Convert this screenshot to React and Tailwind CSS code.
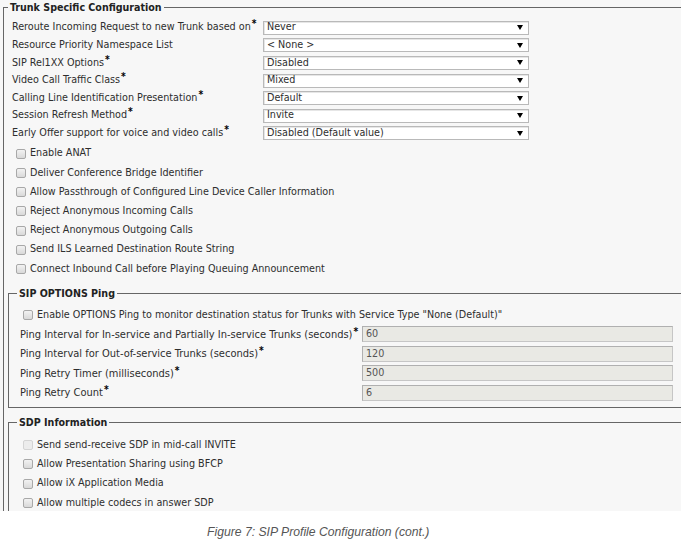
import React from 'react';

const trunkRows = [
  { label: 'Reroute Incoming Request to new Trunk based on', req: true, value: 'Never' },
  { label: 'Resource Priority Namespace List', req: false, value: '< None >' },
  { label: 'SIP Rel1XX Options', req: true, value: 'Disabled' },
  { label: 'Video Call Traffic Class', req: true, value: 'Mixed' },
  { label: 'Calling Line Identification Presentation', req: true, value: 'Default' },
  { label: 'Session Refresh Method', req: true, value: 'Invite' },
  { label: 'Early Offer support for voice and video calls', req: true, value: 'Disabled (Default value)' },
];

const trunkChecks = [
  'Enable ANAT',
  'Deliver Conference Bridge Identifier',
  'Allow Passthrough of Configured Line Device Caller Information',
  'Reject Anonymous Incoming Calls',
  'Reject Anonymous Outgoing Calls',
  'Send ILS Learned Destination Route String',
  'Connect Inbound Call before Playing Queuing Announcement',
];

const pingRows = [
  { label: 'Ping Interval for In-service and Partially In-service Trunks (seconds)', value: '60' },
  { label: 'Ping Interval for Out-of-service Trunks (seconds)', value: '120' },
  { label: 'Ping Retry Timer (milliseconds)', value: '500' },
  { label: 'Ping Retry Count', value: '6' },
];

const sdpChecks = [
  { label: 'Send send-receive SDP in mid-call INVITE', disabled: true },
  { label: 'Allow Presentation Sharing using BFCP' },
  { label: 'Allow iX Application Media' },
  { label: 'Allow multiple codecs in answer SDP' },
];

const Req = () => <sup className="-top-[3px] ml-px text-[10px] font-bold text-black">*</sup>;

const Checkbox = ({ disabled }) => (
  <span
    className={`inline-block h-[10px] w-[10px] shrink-0 rounded-[2px] border ${
      disabled
        ? 'border-[#d4d4d4] bg-[#ececec]'
        : 'border-[#a8a8a8] bg-linear-to-b from-[#f2f2f2] to-[#d9d9d9]'
    }`}
  />
);

const Select = ({ value }) => (
  <div className="flex h-[14px] w-[266px] items-center justify-between border border-[#b9b9b9] bg-white pl-[3px] pr-[5px] shadow-[inset_1px_1px_0_#e6e6e6]">
    <span className="whitespace-nowrap leading-none">{value}</span>
    <span className="h-0 w-0 border-x-[3px] border-t-[5px] border-x-transparent border-t-black" />
  </div>
);

const Legend = ({ children, className }) => (
  <legend className={`px-[2px] text-[10.6px] font-bold leading-[14px] text-[#222] ${className}`}>
    {children}
  </legend>
);

export default function App() {
  return (
    <div className="h-[543px] w-[688px] overflow-hidden bg-white font-['DejaVu_Sans_Condensed','DejaVu_Sans',sans-serif] text-[10.7px] text-[#2e2e2e]">
      {/* screenshot area */}
      <div className="h-[511px] w-[681px] overflow-hidden bg-[#f7f7f7]">
        <fieldset className="ml-[3px] w-[720px] border border-[#666] pl-[4px]">
          <Legend className="ml-0">Trunk Specific Configuration</Legend>

          {/* dropdown rows */}
          <div className="mt-[5px] pl-[4px]">
            {trunkRows.map((row) => (
              <div key={row.label} className="grid h-[17.6px] grid-cols-[251px_266px] items-center">
                <span className="whitespace-nowrap leading-none">
                  {row.label}
                  {row.req && <Req />}
                </span>
                <Select value={row.value} />
              </div>
            ))}
          </div>

          {/* checkboxes */}
          <div className="mt-[2px] pl-[8px]">
            {trunkChecks.map((label) => (
              <div key={label} className="flex h-[19.2px] items-center gap-[4px]">
                <Checkbox />
                <span className="whitespace-nowrap leading-none">{label}</span>
              </div>
            ))}
          </div>

          {/* SIP OPTIONS Ping */}
          <fieldset className="mt-[8px] w-[700px] border border-[#666] pb-[5px] pl-[11px]">
            <Legend className="-ml-[3px]">SIP OPTIONS Ping</Legend>
            <div className="mt-[6px] flex h-[18px] items-center gap-[4px] pl-[3px]">
              <Checkbox />
              <span className="whitespace-nowrap leading-none">
                Enable OPTIONS Ping to monitor destination status for Trunks with Service Type "None (Default)"
              </span>
            </div>
            {pingRows.map((row) => (
              <div key={row.label} className="grid h-[19.5px] grid-cols-[342px_311px] items-center text-[11px]">
                <span className="whitespace-nowrap leading-none">
                  {row.label}
                  <Req />
                </span>
                <div className="flex h-[16px] items-center border border-[#c6c6c6] border-l-[#b0b0b0] border-t-[#b0b0b0] bg-[#e9e9e4] pl-[3px] text-[10.7px] text-[#555]">
                  {row.value}
                </div>
              </div>
            ))}
          </fieldset>

          {/* SDP Information */}
          <fieldset className="mt-[7px] h-[120px] w-[700px] border border-[#666] pl-[11px]">
            <Legend className="-ml-[3px]">SDP Information</Legend>
            <div className="mt-[6px] pl-[3px]">
              {sdpChecks.map((c) => (
                <div key={c.label} className="flex h-[19.3px] items-center gap-[4px]">
                  <Checkbox disabled={c.disabled} />
                  <span className="whitespace-nowrap leading-none">{c.label}</span>
                </div>
              ))}
            </div>
          </fieldset>
        </fieldset>
      </div>

      {/* caption */}
      <div className="pl-[207px] pt-[14px] font-['Liberation_Sans',Arial,sans-serif] text-[12.2px] italic leading-[14px] text-[#555]">
        Figure 7: SIP Profile Configuration (cont.)
      </div>
    </div>
  );
}
